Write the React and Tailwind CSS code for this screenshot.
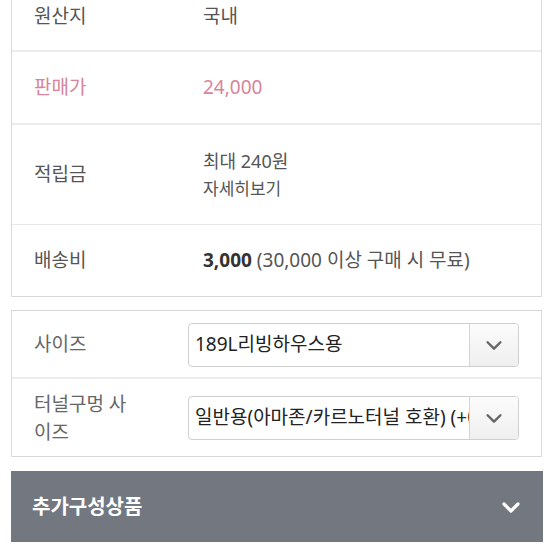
import React from "react";

const Chevron = ({ className, stroke = 2.5 }) => (
  <svg viewBox="0 0 24 24" className={className} fill="none" stroke="currentColor" strokeWidth={stroke} strokeLinecap="round" strokeLinejoin="round">
    <polyline points="5,9 12,16 19,9" />
  </svg>
);

function Select({ value }) {
  return (
    <div className="flex h-[44px] w-[331px] items-stretch rounded-[4px] border border-[#cfcfcf] bg-white overflow-hidden">
      <div className="flex-1 min-w-0 flex items-center pl-[6px] text-[19px] text-[#222] whitespace-nowrap overflow-hidden">
        {value}
      </div>
      <div className="w-[49px] shrink-0 flex items-center justify-center border-l border-[#d5d5d5] bg-gradient-to-b from-[#fcfcfc] to-[#efefef]">
        <Chevron className="w-[22px] h-[22px] text-[#666]" stroke={2.6} />
      </div>
    </div>
  );
}

export default function App() {
  return (
    <div className="w-[553px] h-[553px] overflow-hidden bg-white" style={{ fontFamily: '"Noto Sans", "Noto Sans CJK KR", sans-serif' }}>
      {/* info box */}
      <div className="mt-[-21px] ml-[11px] w-[531px] border border-[#d9d9d9]">
        <div className="flex items-center h-[72px] pt-[2px] border-b-2 border-[#ececec]">
          <div className="w-[191px] shrink-0 pl-[22px] text-[19px] text-[#555]">원산지</div>
          <div className="text-[19px] text-[#555]">국내</div>
        </div>
        <div className="flex items-center h-[73px] border-b-2 border-[#ececec]">
          <div className="w-[191px] shrink-0 pl-[22px] text-[19px] text-[#d9849a]">판매가</div>
          <div className="text-[19px] text-[#d9849a]">24,000</div>
        </div>
        <div className="flex items-center h-[100px] border-b border-[#e8e8e8]">
          <div className="w-[191px] shrink-0 pl-[22px] text-[19px] text-[#555]">적립금</div>
          <div className="flex flex-col text-[#555]">
            <div className="text-[18px] leading-[28px]">최대 240원</div>
            <div className="text-[17px] leading-[28px]">자세히보기</div>
          </div>
        </div>
        <div className="flex items-center h-[71px]">
          <div className="w-[191px] shrink-0 pl-[22px] text-[19px] text-[#555]">배송비</div>
          <div className="text-[19px] text-[#555] whitespace-nowrap">
            <span className="font-bold text-[#333]">3,000</span> (30,000 이상 구매 시 무료)
          </div>
        </div>
      </div>

      {/* options box */}
      <div className="mt-[13px] ml-[11px] w-[531px] border border-[#d9d9d9]">
        <div className="flex items-center h-[68px] pt-[1px] border-b-2 border-[#ececec]">
          <div className="w-[176px] shrink-0 pl-[22px] text-[19px] text-[#666]">사이즈</div>
          <Select value="189L리빙하우스용" />
        </div>
        <div className="flex items-center h-[77px]">
          <div className="w-[176px] shrink-0 pl-[22px] pr-[50px] text-[19px] leading-[28px] text-[#666]">터널구멍 사이즈</div>
          <Select value="일반용(아마존/카르노터널 호환) (+0원)" />
        </div>
      </div>

      {/* additional products bar */}
      <div className="mt-[14px] ml-[11px] w-[532px] h-[71px] bg-[#737780] flex items-center justify-between pl-[21px] pr-[20px]">
        <div className="text-[20px] font-bold text-white">추가구성상품</div>
        <Chevron className="w-[24px] h-[24px] text-white" stroke={3.2} />
      </div>
    </div>
  );
}
